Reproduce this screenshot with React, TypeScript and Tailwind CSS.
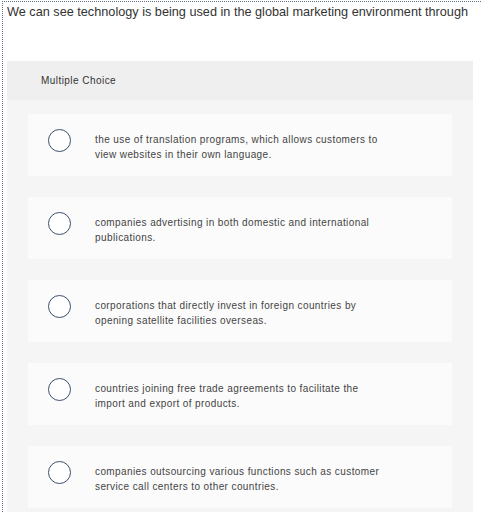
const options = [
  [
    "the use of translation programs, which allows customers to",
    "view websites in their own language.",
  ],
  [
    "companies advertising in both domestic and international",
    "publications.",
  ],
  [
    "corporations that directly invest in foreign countries by",
    "opening satellite facilities overseas.",
  ],
  [
    "countries joining free trade agreements to facilitate the",
    "import and export of products.",
  ],
  [
    "companies outsourcing various functions such as customer",
    "service call centers to other countries.",
  ],
];

const App = () => {
  return (
    <div className="ml-[2px] mt-[1px] h-[511px] overflow-hidden border-l border-t border-dotted border-[#5d6f8c] bg-white font-['Liberation_Sans',Arial,sans-serif]">
      <p className="pl-[4px] pt-[2px] text-[12.7px] leading-[16px] text-[#333333]">
        We can see technology is being used in the global marketing environment through
      </p>

      <div className="ml-[4px] mt-[41px] w-[466px] bg-[#f5f5f5]">
        <div className="flex h-[39px] items-center bg-[#efefef] pl-[34px] text-[10px] tracking-[0.45px] text-[#333333]">
          Multiple Choice
        </div>

        <div className="flex flex-col gap-[21px] px-[21px] pt-[14px] pb-[10px]">
          {options.map((lines, i) => (
            <div
              key={i}
              className="flex h-[62px] items-start bg-[#fbfbfb] pl-[20px] pt-[15px]"
            >
              <span className="h-[23px] w-[23px] shrink-0 rounded-full border-[1.5px] border-[#3b4f6b] bg-white" />
              <div className="ml-[24px] mt-[3px] text-[10px] leading-[15px] tracking-[0.4px] text-[#444444]">
                {lines.map((line) => (
                  <div key={line}>{line}</div>
                ))}
              </div>
            </div>
          ))}
        </div>
      </div>
    </div>
  );
};

export default App;
